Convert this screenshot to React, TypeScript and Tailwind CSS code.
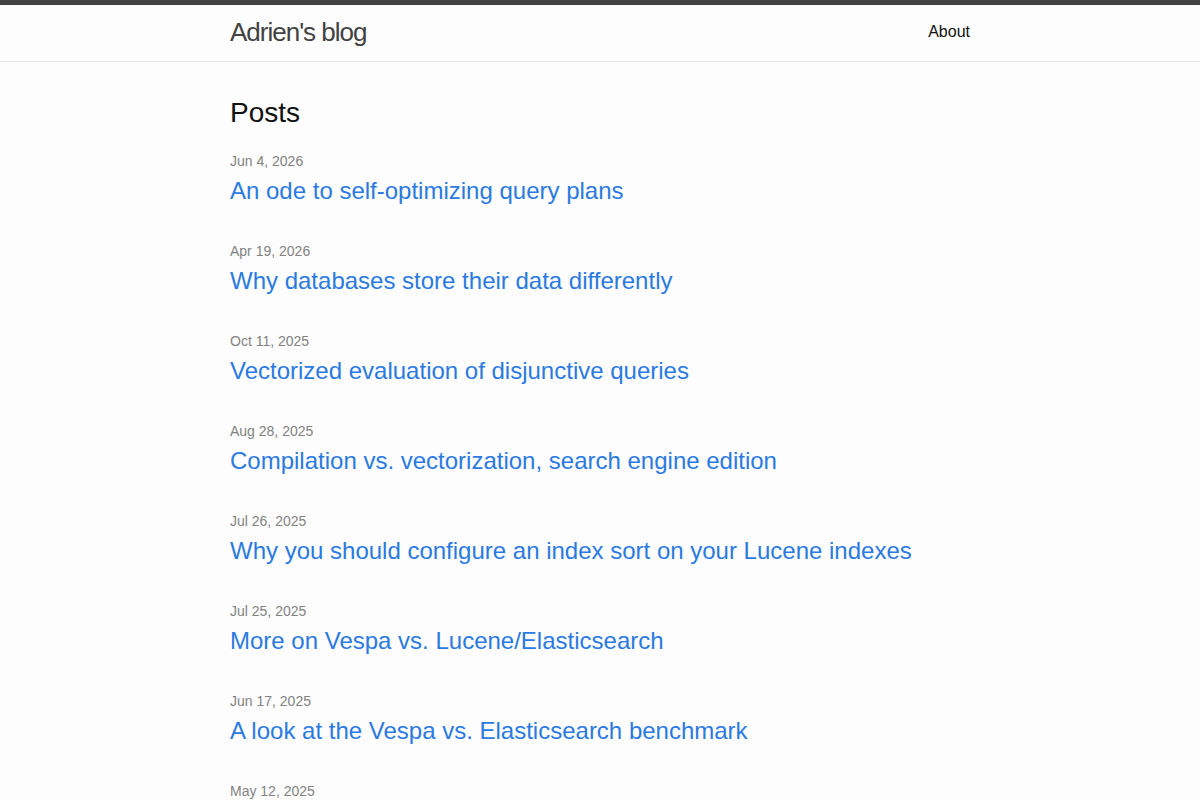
const posts = [
  { date: "Jun 4, 2026", title: "An ode to self-optimizing query plans" },
  { date: "Apr 19, 2026", title: "Why databases store their data differently" },
  { date: "Oct 11, 2025", title: "Vectorized evaluation of disjunctive queries" },
  { date: "Aug 28, 2025", title: "Compilation vs. vectorization, search engine edition" },
  { date: "Jul 26, 2025", title: "Why you should configure an index sort on your Lucene indexes" },
  { date: "Jul 25, 2025", title: "More on Vespa vs. Lucene/Elasticsearch" },
  { date: "Jun 17, 2025", title: "A look at the Vespa vs. Elasticsearch benchmark" },
  { date: "May 12, 2025", title: "Faster top-k retrieval with block-max WAND" },
];

export default function App() {
  return (
    <div className="min-h-screen bg-[#fdfdfd] font-['Liberation_Sans',Arial,sans-serif] text-[#111] text-base">
      <header className="border-t-[5px] border-b border-t-[#424242] border-b-[#e8e8e8]">
        <div className="mx-auto flex h-14 max-w-[800px] items-start justify-between px-[30px]">
          <a href="#" className="text-[26px] font-light leading-[54px] tracking-[-1px] text-[#424242]">
            Adrien's blog
          </a>
          <nav>
            <a href="#" className="leading-[54px] text-[#111]">
              About
            </a>
          </nav>
        </div>
      </header>

      <main className="mx-auto max-w-[800px] px-[30px] py-[30px]">
        <h2 className="mb-[17px] text-[28px] leading-[42px]">Posts</h2>
        <ul className="flex flex-col gap-[32px]">
          {posts.map((post) => (
            <li key={post.title}>
              <span className="block text-sm leading-[21px] text-[#828282]">{post.date}</span>
              <h3 className="mt-px text-2xl leading-[36px]">
                <a href="#" className="text-[#2a7ae2]">
                  {post.title}
                </a>
              </h3>
            </li>
          ))}
        </ul>
      </main>
    </div>
  );
}
